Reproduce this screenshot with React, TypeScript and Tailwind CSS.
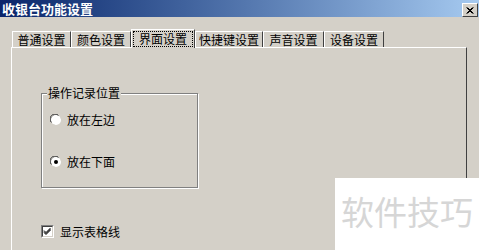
const tabs = [
    { label: "普通设置", width: "w-[59px]" },
    { label: "颜色设置", width: "w-[60px]" },
    { label: "界面设置", width: "w-[64px]", active: true },
    { label: "快捷键设置", width: "w-[68px]" },
    { label: "声音设置", width: "w-[61px]" },
    { label: "设备设置", width: "w-[60px]" }
];

const Radio = ({ checked = false }: { checked?: boolean }) => (
    <svg width="12" height="12" viewBox="0 0 12 12" className="shrink-0">
        <path d="M1 8 A5.5 5.5 0 0 1 8 1" stroke="#808080" fill="none" />
        <circle cx="6" cy="6" r="5" fill="#fff" />
        <path d="M1.5 8.5 A4.5 4.5 0 0 1 8.5 1.5" stroke="#404040" fill="none" />
        <path d="M10.5 3.5 A4.5 4.5 0 0 1 3.5 10.5" stroke="#d4d0c8" fill="none" />
        {checked && <circle cx="6" cy="6" r="2" fill="#000" />}
    </svg>
);

const Checkbox = () => (
    <div className="border-[#808080] border-b-white border-r-white border shrink-0">
        <div className="bg-white border border-[#404040] border-b-[#d4d0c8] border-r-[#d4d0c8] flex h-[11px] items-center justify-center w-[11px]">
            <svg width="9" height="9" viewBox="0 0 9 9">
                <path d="M1 3.5 L3 5.5 L7.5 1 M1 4.5 L3 6.5 L7.5 2 M1 5.5 L3 7.5 L7.5 3" stroke="#000" strokeWidth="1" fill="none" />
            </svg>
        </div>
    </div>
);

const App = () => {
    return (
        <div className="bg-[#d4d0c8] flex flex-col font-['Noto_Sans_CJK_SC','Noto_Sans',sans-serif] h-[250px] overflow-hidden relative text-[12px] text-black w-[479px]">
            <div className="bg-linear-to-r flex from-[#0a246a] h-[17px] items-center justify-between pl-[2px] pr-[1px] to-[#a6caf0] shrink-0">
                <span className="font-bold leading-[13px] text-[13px] text-white">收银台功能设置</span>
                <div className="bg-[#d4d0c8] border border-b-[#404040] border-r-[#404040] border-white flex h-[14px] items-center justify-center mt-[3px] w-[16px]">
                    <svg width="8" height="7" viewBox="0 0 8 7">
                        <path d="M0.5 0.5 L6.5 6.5 M1.5 0.5 L7.5 6.5 M6.5 0.5 L0.5 6.5 M7.5 0.5 L1.5 6.5" stroke="#000" fill="none" />
                    </svg>
                </div>
            </div>

            <div className="flex flex-1 flex-col pl-[11px] pr-[12px] pt-[12px]">
                <div className="flex h-[18px] items-end pl-[1px] relative z-10">
                    {tabs.map((tab) =>
                        tab.active ? (
                            <div
                                key={tab.label}
                                className={`${tab.width} bg-[#d4d0c8] border-l border-r border-r-[#404040] border-t border-white flex h-[19px] items-start justify-center -mb-[1px] pt-[1px]`}
                            >
                                <span className="border border-black border-dotted leading-[14px] px-[5px]">{tab.label}</span>
                            </div>
                        ) : (
                            <div
                                key={tab.label}
                                className={`${tab.width} border-l border-r border-r-[#404040] border-t border-white flex h-[16px] items-center justify-center leading-[14px]`}
                            >
                                {tab.label}
                            </div>
                        )
                    )}
                </div>

                <div className="border-l border-r border-r-[#404040] border-t border-white flex-1 pl-[29px] pt-[45px]">
                    <div className="border border-[#808080] h-[95px] pl-[8px] pt-[20px] relative shadow-[1px_1px_0_#fff,inset_1px_1px_0_#fff] w-[157px]">
                        <span className="absolute bg-[#d4d0c8] leading-[12px] left-[5px] px-[1px] -top-[7px]">操作记录位置</span>
                        <div className="flex gap-[5px] h-[12px] items-center leading-[12px]">
                            <Radio />
                            <span>放在左边</span>
                        </div>
                        <div className="flex gap-[5px] h-[12px] items-center leading-[12px] mt-[30px]">
                            <Radio checked />
                            <span>放在下面</span>
                        </div>
                    </div>

                    <div className="flex gap-[6px] items-center leading-[12px] mt-[37px]">
                        <Checkbox />
                        <span>显示表格线</span>
                    </div>
                </div>
            </div>

            <div className="absolute bg-white h-[72px] left-[335px] pl-[6px] pt-[17px] top-[178px] w-[144px]">
                <span className="block leading-[33px] text-[#d6d6d6] text-[33px]">软件技巧</span>
            </div>
        </div>
    );
};

export default App;
